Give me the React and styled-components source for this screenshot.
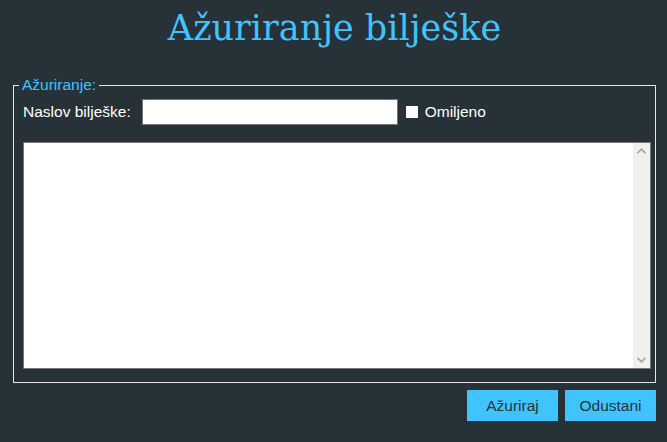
import React from 'react'
import styled, { createGlobalStyle } from 'styled-components'

const GlobalStyle = createGlobalStyle`
  html, body {
    margin: 0;
    padding: 0;
    background: #263238;
  }
  body {
    font-family: "Liberation Sans", Arial, sans-serif;
    color: #ffffff;
  }
`

const Page = styled.div`
  width: 667px;
  height: 442px;
  box-sizing: border-box;
  padding: 0 11px 0 13px;
  display: flex;
  flex-direction: column;
`

const Title = styled.h1`
  margin: 6px 0 0 0;
  height: 54px;
  text-align: center;
  font-family: "DejaVu Serif", "Liberation Serif", serif;
  font-weight: normal;
  font-size: 35px;
  line-height: 44px;
  color: #40c4ff;
`

const Fieldset = styled.fieldset`
  margin: 16px 0 0 0;
  padding: 5px 9px 13px 9px;
  border: 1px solid #e6e6e6;
  min-width: 0;
  display: flex;
  flex-direction: column;
  gap: 17px;
`

const Legend = styled.legend`
  padding: 0 3px 0 3px;
  margin-left: -4px;
  font-size: 15.5px;
  color: #40c4ff;
`

const Row = styled.div`
  display: flex;
  align-items: center;
  height: 26px;
  font-size: 15.5px;
`

const Label = styled.label`
  margin-right: 11px;
`

const TextInput = styled.input`
  box-sizing: border-box;
  width: 256px;
  height: 26px;
  border: 1px solid #767676;
  background: #ffffff;
  margin: 0;
  outline: none;
`

const Check = styled.span`
  width: 12px;
  height: 12px;
  background: #ffffff;
  margin: 0 7px 0 8px;
`

const AreaBox = styled.div`
  box-sizing: border-box;
  width: 628px;
  height: 227px;
  border: 1px solid #767676;
  background: #ffffff;
  display: flex;
`

const Area = styled.textarea`
  flex: 1;
  border: none;
  margin: 0;
  padding: 2px;
  resize: none;
  outline: none;
  background: transparent;
`

const ScrollTrack = styled.div`
  width: 17px;
  background: #f0f0f0;
  display: flex;
  flex-direction: column;
  justify-content: space-between;
  align-items: center;
  padding: 5px 0 5px 0;
`

const Arrow = ({ down }) => (
  <svg width="9" height="6" viewBox="0 0 9 6">
    <path
      d={down ? 'M0.5 0.8 L4.5 4.8 L8.5 0.8' : 'M0.5 5.2 L4.5 1.2 L8.5 5.2'}
      fill="none"
      stroke="#a3a3a3"
      strokeWidth="1.6"
    />
  </svg>
)

const Actions = styled.div`
  display: flex;
  justify-content: flex-end;
  gap: 7px;
  margin-top: 7px;
`

const Button = styled.button`
  width: 91px;
  height: 31px;
  border: none;
  background: #40c4ff;
  color: #263238;
  font-family: "Liberation Sans", Arial, sans-serif;
  font-size: 15.5px;
  padding: 0;
  cursor: pointer;
`

export default function App() {
  return (
    <>
      <GlobalStyle />
      <Page>
        <Title>Ažuriranje bilješke</Title>
        <Fieldset>
          <Legend>Ažuriranje:</Legend>
          <Row>
            <Label>Naslov bilješke:</Label>
            <TextInput type="text" />
            <Check />
            <span>Omiljeno</span>
          </Row>
          <AreaBox>
            <Area />
            <ScrollTrack>
              <Arrow />
              <Arrow down />
            </ScrollTrack>
          </AreaBox>
        </Fieldset>
        <Actions>
          <Button>Ažuriraj</Button>
          <Button>Odustani</Button>
        </Actions>
      </Page>
    </>
  )
}
